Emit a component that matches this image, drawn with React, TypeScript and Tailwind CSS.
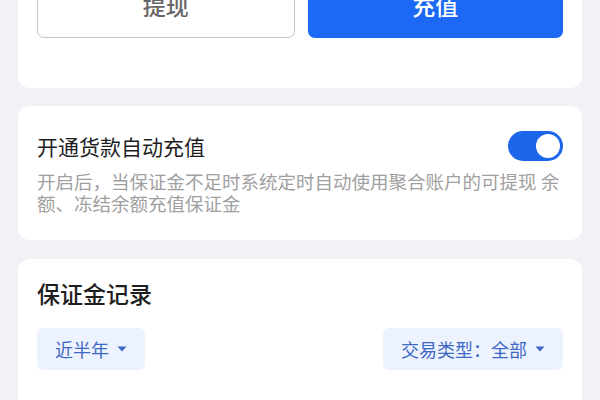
const font = { fontFamily: '"Noto Sans CJK SC", "Noto Sans", sans-serif' };

function Caret() {
  return (
    <svg width="10" height="6" viewBox="0 0 10 6" className="ml-[8px]">
      <path d="M0.5 0.5h9L5 5.5z" fill="#3d68c4" />
    </svg>
  );
}

export default function App() {
  return (
    <div
      className="w-[600px] h-[400px] overflow-hidden bg-[#f1f2f5] px-[18px] flex flex-col"
      style={font}
    >
      {/* balance actions */}
      <div className="-mt-[40px] bg-white rounded-[12px] px-[19px] pt-[18px] pb-[50px] flex gap-[13px]">
        <button className="flex-1 h-[60px] pb-[5px] rounded-[7px] border border-[#c6c6c6] bg-white text-[23px] text-[#666] font-medium">
          提现
        </button>
        <button className="flex-1 h-[60px] pb-[5px] rounded-[7px] bg-[#1b69f5] text-[23px] text-white font-medium">
          充值
        </button>
      </div>

      {/* auto recharge */}
      <div className="mt-[18px] bg-white rounded-[12px] px-[19px] pt-[25px] pb-[26px]">
        <div className="flex items-center justify-between">
          <span className="text-[21px] leading-[30px] text-[#1e1e1e]">开通货款自动充值</span>
          <div className="w-[55px] h-[30px] rounded-full bg-[#1b66ea] flex items-center justify-end pr-[3px]">
            <div className="w-[24px] h-[24px] rounded-full bg-white" />
          </div>
        </div>
        <p className="mt-[9px] text-[18.5px] leading-[22px] text-[#a0a0a0]">
          开启后，当保证金不足时系统定时自动使用聚合账户的可提现 余额、冻结余额充值保证金
        </p>
      </div>

      {/* records */}
      <div className="mt-[19px] bg-white rounded-t-[12px] px-[19px] pt-[18px] flex-1">
        <h2 className="text-[23px] leading-[32px] font-medium text-[#1e1e1e]">保证金记录</h2>
        <div className="mt-[19px] flex justify-between">
          <button className="h-[42px] px-[18px] rounded-[6px] bg-[#edf3fe] flex items-center text-[18px] text-[#3d68c4]">
            近半年
            <Caret />
          </button>
          <button className="h-[42px] px-[18px] rounded-[6px] bg-[#edf3fe] flex items-center text-[18px] text-[#3d68c4]">
            交易类型：全部
            <Caret />
          </button>
        </div>
      </div>
    </div>
  );
}
